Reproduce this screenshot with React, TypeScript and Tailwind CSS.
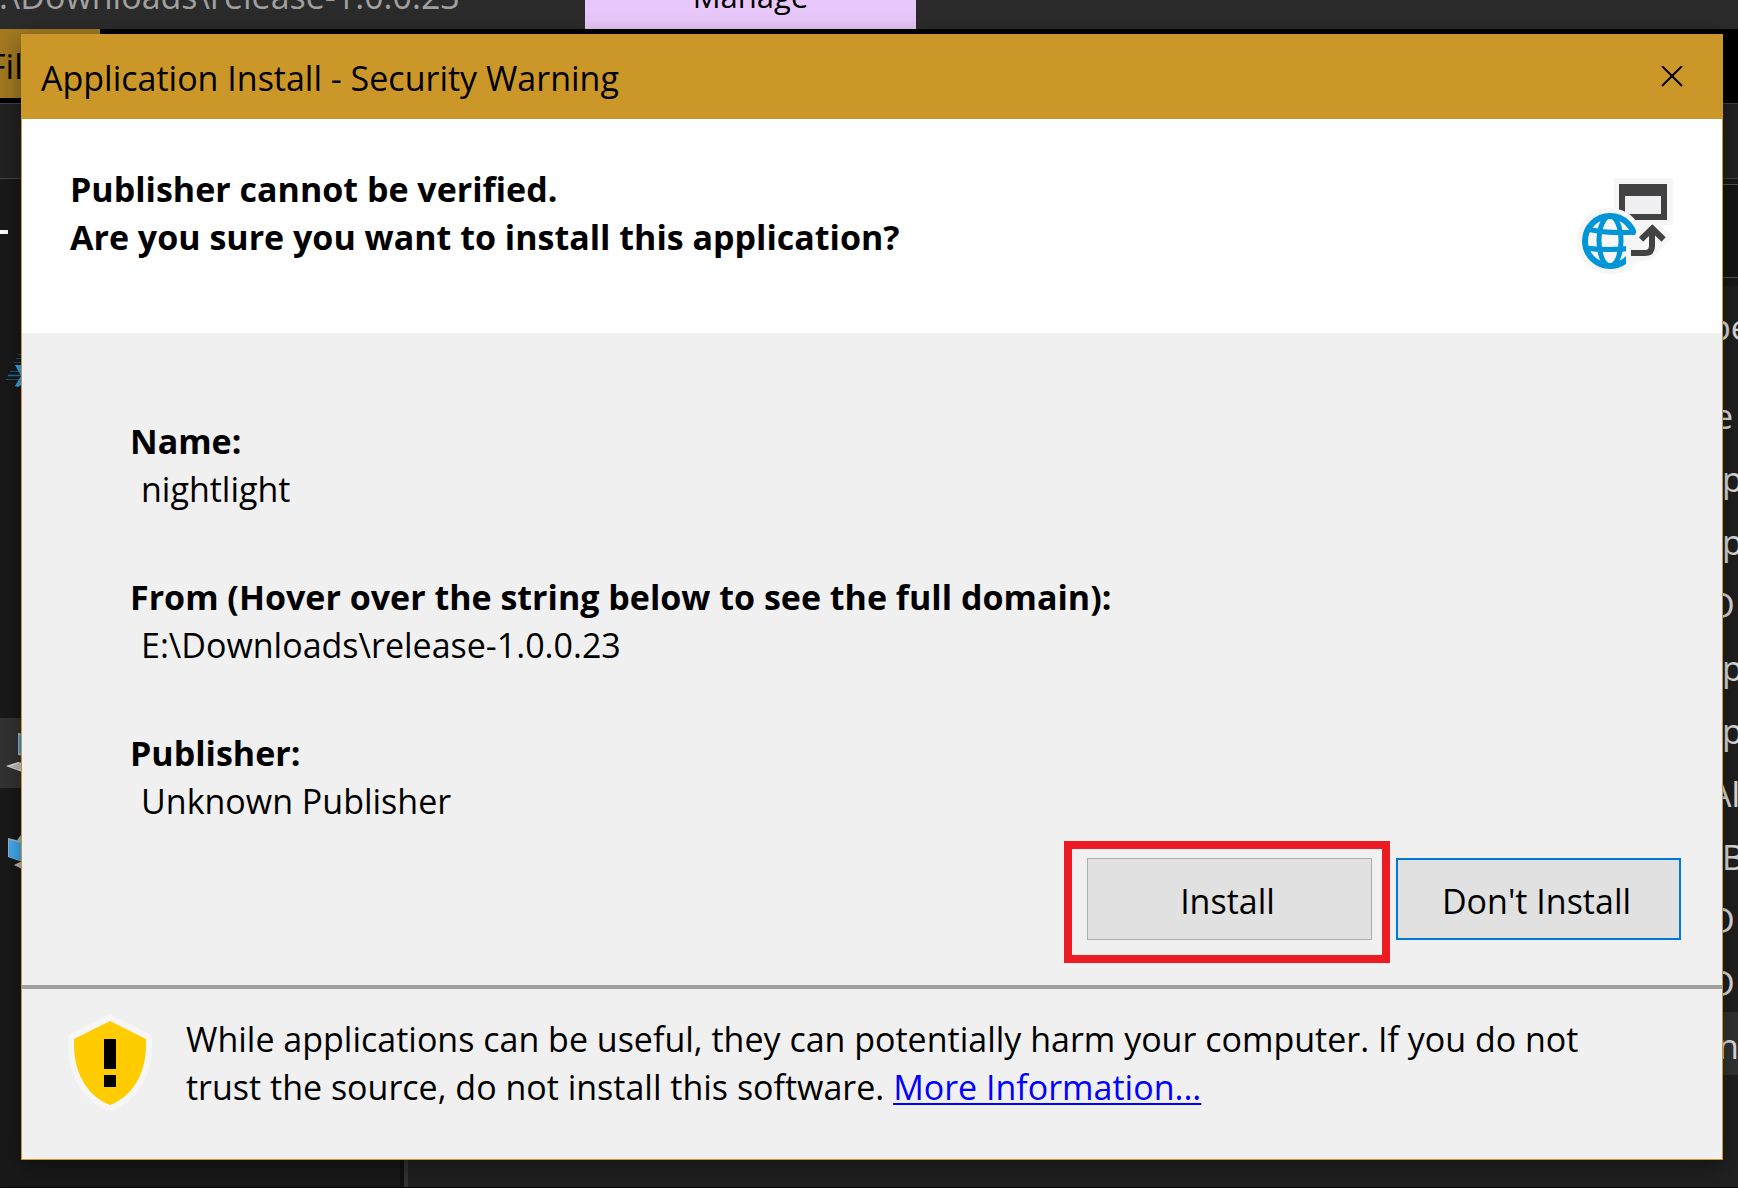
import React from "react";

const details = [
  { label: "Name:", value: "nightlight" },
  { label: "From (Hover over the string below to see the full domain):", value: "E:\\Downloads\\release-1.0.0.23" },
  { label: "Publisher:", value: "Unknown Publisher" },
];

const fileRows = [
  { text: "e", pad: "pl-2" },
  { text: "p", pad: "pl-4" },
  { text: "p", pad: "pl-4" },
  { text: "D", pad: "pl-1" },
  { text: "p", pad: "pl-4" },
  { text: "p", pad: "pl-4" },
  { text: "Al", pad: "pl-1" },
  { text: "B", pad: "pl-4" },
  { text: "D", pad: "pl-1" },
  { text: "D", pad: "pl-1" },
  { text: "n", pad: "pl-3", selected: true },
];

function InstallIcon() {
  return (
    <svg viewBox="0 0 96 96" className="size-24 shrink-0" aria-hidden="true">
      <defs>
        <clipPath id="globe-cut">
          <path d="M0 0H58L60 52L58 57H49V96H0Z" />
        </clipPath>
      </defs>
      <g fill="#f6f6f6">
        <rect x="37" y="0" width="59" height="47" />
        <circle cx="33" cy="63" r="33" />
        <path d="M75 41L96 59L82 73Q78 82 66 83L50 87V55Z" />
      </g>
      <path fill="#424242" fillRule="evenodd" d="M42 6H90V42H42ZM48 18V36H84V18Z" />
      <rect x="48" y="18" width="36" height="18" fill="#f0eff1" />
      <circle cx="33" cy="63" r="33" fill="#f6f6f6" />
      <path d="M75 43L94 59L82 72Q78 82 66 83L50 87V58H62Z" fill="#f6f6f6" />
      <g clipPath="url(#globe-cut)" fill="none" stroke="#0095d7">
        <circle cx="33" cy="63" r="25" strokeWidth="6" />
        <ellipse cx="33" cy="63" rx="11" ry="25" strokeWidth="5" />
        <path d="M9 51Q33 56 58 54" strokeWidth="5" />
        <path d="M8 70Q30 73 58 70" strokeWidth="5" />
      </g>
      <g fill="none" stroke="#424242" strokeWidth="6">
        <path d="M54 75H68Q75 75 75 68V52" />
        <path d="M64 61.5L75.3 50.5L86.600 61.5" />
      </g>
    </svg>
  );
}

function ShieldIcon() {
  return (
    <svg viewBox="0 0 84 96" className="h-24 w-[84px] shrink-0" aria-hidden="true">
      <path
        d="M42 6L78 24V30C78 62 61 83 42 90C23 83 6 62 6 30V24Z"
        fill="#f6f6f6"
        stroke="#f6f6f6"
        strokeWidth="12"
        strokeLinejoin="round"
      />
      <path d="M42 6L78 24V30C78 62 61 83 42 90C23 83 6 62 6 30V24Z" fill="#ffcc00" />
      <path d="M36 24H48V54H36ZM36 60H48V72H36Z" fill="#000" />
    </svg>
  );
}

function QuickAccessIcon() {
  return (
    <svg viewBox="0 0 48 40" className="h-10 w-12 shrink-0" aria-hidden="true">
      <g stroke="#14537d" strokeWidth="1">
        <path d="M18 3.500H30M16 7.500H30M14 11.500H30M10 20.500H30M6 28.500H30" />
        <path d="M8 24.500H30" stroke="#1c74ae" strokeWidth="1.500" />
      </g>
      <path d="M15 14H24L30 4L35 14H46L38 23L42 36L30 29L18 36L15 35L21 25Z" fill="#35a8f5" />
    </svg>
  );
}

function ThisPcIcon() {
  return (
    <svg viewBox="0 0 48 40" className="h-10 w-12 shrink-0" aria-hidden="true">
      <path d="M18 0L46 4V26L18 22Z" fill="#9fb4c2" />
      <path d="M19 2L45 6V24L19 20Z" fill="#3a9fe4" />
      <path d="M6 33L18 29L32 32L22 39Z" fill="#dcdfe3" />
      <path d="M10 34L20 31M13 35L24 32M16 36L27 33" stroke="#a3a9af" />
    </svg>
  );
}

function NetworkIcon() {
  return (
    <svg viewBox="0 0 48 38" className="h-[38px] w-12 shrink-0" aria-hidden="true">
      <circle cx="30" cy="14" r="14" fill="#86b9c4" />
      <path d="M8 6L40 14V36L8 25Z" fill="#9fb4c2" />
      <path d="M9 8L40 16V35L9 25Z" fill="#41aef5" />
      <path d="M14 33L20 30L30 33L22 37Z" fill="#b9bcc0" />
    </svg>
  );
}

function ExplorerWindow() {
  return (
    <div className="absolute inset-0 flex flex-col overflow-hidden border-b border-black bg-[#202020] text-[34px] leading-[48px]">
      <div className="flex h-[29px] shrink-0 items-end bg-[#2b2b2b]">
        <div className="flex w-[585px] pb-[9px]">
          <span className="-ml-5 whitespace-nowrap text-[#a0a0a0]">E:\Downloads\release-1.0.0.23</span>
        </div>
        <div className="flex h-full w-[331px] items-end justify-center bg-[#e8c8fa] pb-[9px] text-[31px] text-black">
          Manage
        </div>
      </div>
      <div className="h-[75px] shrink-0 border-b border-[#444] bg-black">
        <div className="flex h-[69px] w-[100px] items-center bg-[#a37a22] pt-1 text-black">
          <span className="-ml-3">File</span>
        </div>
      </div>
      <div className="h-[75px] shrink-0 border-b border-[#444] bg-[#222]" />
      <div className="flex min-h-0 flex-1">
        <div className="flex w-[400px] shrink-0 flex-col bg-[#191919]">
          <div className="mt-[51px] h-1 w-2 bg-white" />
          <div className="mt-[117px] flex">
            <QuickAccessIcon />
          </div>
          <div className="mt-[327px] flex h-[70px] items-center bg-[#333]">
            <ThisPcIcon />
          </div>
          <div className="mt-[44px] flex">
            <NetworkIcon />
          </div>
        </div>
        <div className="w-2 shrink-0 border-r-4 border-[#333] bg-[#111]" />
        <div className="flex min-w-0 flex-1 flex-col">
          <div className="h-[107px] shrink-0 bg-[#191919] pt-[5px]">
            <div className="h-[94px] border-y border-[#555] bg-[#141414]" />
          </div>
          <div className="ml-auto w-8 overflow-hidden text-[#e0e0e0]">
            <div className="h-24 pl-1 pt-[17px]">pe</div>
            {fileRows.map((row, i) => (
              <div key={i} className={`flex h-[63px] items-center pt-1 ${row.pad} ${row.selected ? "bg-[#333]" : ""}`}>
                {row.text}
              </div>
            ))}
          </div>
        </div>
      </div>
    </div>
  );
}

export default function App() {
  return (
    <div className="relative flex min-h-screen bg-[#202020] pb-7 pl-[21px] pr-[15px] pt-[34px] font-['Open_Sans','Noto_Sans',sans-serif] text-[34px] leading-[48px] text-black">
      <ExplorerWindow />
      <div
        role="dialog"
        aria-labelledby="dialog-title"
        className="relative flex min-w-0 flex-1 flex-col border border-[#ca9728] bg-[#f0f0f0] shadow-[0_6px_24px_rgba(0,0,0,0.4)]"
      >
        <div className="flex h-[84px] shrink-0 items-center justify-between bg-[#ca9728] pl-[19px] pr-[39px]">
          <h1 id="dialog-title" className="pt-0.5">Application Install - Security Warning</h1>
          <button type="button" aria-label="Close" className="flex size-[22px] items-center justify-center">
            <svg viewBox="0 0 22 22" className="size-[22px]" aria-hidden="true">
              <path d="M1 0L21 20M21 0L1 20" stroke="#000" strokeWidth="2" fill="none" />
            </svg>
          </button>
        </div>

        <div className="flex h-[214px] shrink-0 items-start justify-between bg-white pl-12 pr-[49px]">
          <h2 className="pt-[46px] font-bold">
            Publisher cannot be verified.
            <br />
            Are you sure you want to install this application?
          </h2>
          <div className="flex pt-[59px]">
            <InstallIcon />
          </div>
        </div>

        <div className="flex flex-1 flex-col pb-[22px] pl-[108px] pr-[41px] pt-[84px]">
          <dl className="flex flex-col gap-[60px]">
            {details.map((d) => (
              <div key={d.label}>
                <dt className="font-bold">{d.label}</dt>
                <dd className="pl-[11px]">{d.value}</dd>
              </div>
            ))}
          </dl>
          <div className="mt-auto flex items-start justify-end gap-[6px]">
            <div className="border-8 border-[#ed1c24] pb-[15px] pl-[15px] pr-[10px] pt-[9px]">
              <button type="button" className="flex h-[82px] w-[285px] items-center justify-center border border-[#adadad] bg-[#e1e1e1] pr-1 pt-1">
                Install
              </button>
            </div>
            <button
              type="button"
              className="mt-[17px] flex h-[82px] w-[285px] items-center justify-center border-2 border-[#0078d7] bg-[#e1e1e1] pr-1 pt-1"
            >
              Don't Install
            </button>
          </div>
        </div>

        <div className="flex h-[174px] shrink-0 items-start gap-[34px] border-t-4 border-[#a0a0a0] pl-[46px] pr-20 pt-[26px]">
          <ShieldIcon />
          <p>
            While applications can be useful, they can potentially harm your computer. If you do not trust the source, do
            not install this software.{" "}
            <a href="#more-information" className="text-[#0000ff] underline decoration-2 underline-offset-[3px]">
              More Information...
            </a>
          </p>
        </div>
      </div>
    </div>
  );
}
